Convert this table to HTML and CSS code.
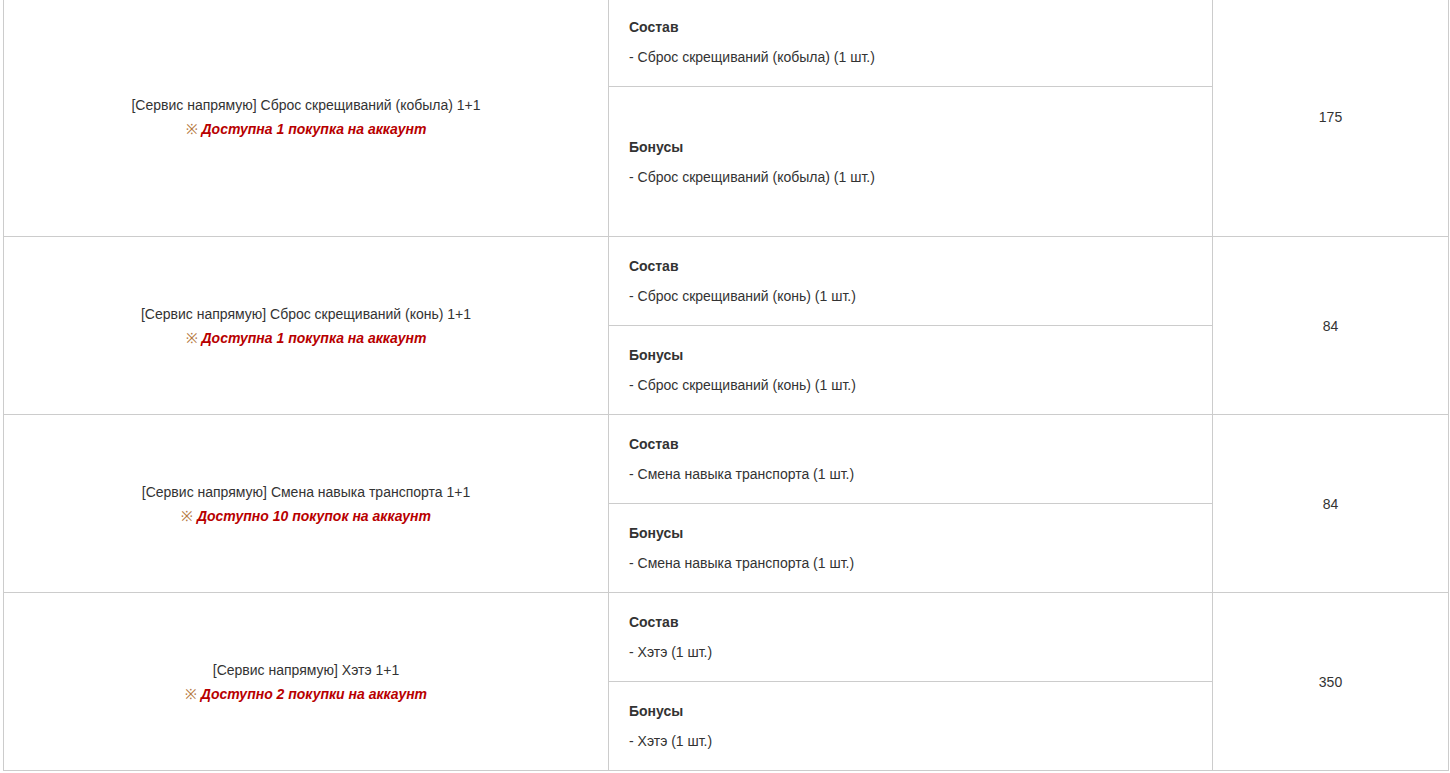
FILE: index.html
```html
<!DOCTYPE html>
<html lang="ru">
<head>
<meta charset="utf-8">
<title>Товары</title>
<link rel="stylesheet" href="styles.css">
</head>
<body>
<table class="goods">
  <colgroup>
    <col class="c-name">
    <col class="c-items">
    <col class="c-price">
  </colgroup>
  <tbody>
    <tr>
      <td class="name" rowspan="2">[Сервис напрямую] Сброс скрещиваний (кобыла) 1+1<br><span class="note"><span class="mark">※</span> Доступна 1 покупка на аккаунт</span></td>
      <td class="items"><p class="head">Состав</p><p>- Сброс скрещиваний (кобыла) (1 шт.)</p></td>
      <td class="price" rowspan="2">175</td>
    </tr>
    <tr>
      <td class="items tall"><p class="head">Бонусы</p><p>- Сброс скрещиваний (кобыла) (1 шт.)</p></td>
    </tr>
    <tr>
      <td class="name" rowspan="2">[Сервис напрямую] Сброс скрещиваний (конь) 1+1<br><span class="note"><span class="mark">※</span> Доступна 1 покупка на аккаунт</span></td>
      <td class="items"><p class="head">Состав</p><p>- Сброс скрещиваний (конь) (1 шт.)</p></td>
      <td class="price" rowspan="2">84</td>
    </tr>
    <tr>
      <td class="items"><p class="head">Бонусы</p><p>- Сброс скрещиваний (конь) (1 шт.)</p></td>
    </tr>
    <tr>
      <td class="name" rowspan="2">[Сервис напрямую] Смена навыка транспорта 1+1<br><span class="note"><span class="mark">※</span> Доступно 10 покупок на аккаунт</span></td>
      <td class="items"><p class="head">Состав</p><p>- Смена навыка транспорта (1 шт.)</p></td>
      <td class="price" rowspan="2">84</td>
    </tr>
    <tr>
      <td class="items"><p class="head">Бонусы</p><p>- Смена навыка транспорта (1 шт.)</p></td>
    </tr>
    <tr>
      <td class="name" rowspan="2">[Сервис напрямую] Хэтэ 1+1<br><span class="note"><span class="mark">※</span> Доступно 2 покупки на аккаунт</span></td>
      <td class="items"><p class="head">Состав</p><p>- Хэтэ (1 шт.)</p></td>
      <td class="price" rowspan="2">350</td>
    </tr>
    <tr>
      <td class="items"><p class="head">Бонусы</p><p>- Хэтэ (1 шт.)</p></td>
    </tr>
  </tbody>
</table>
</body>
</html>
```

FILE: styles.css
```css
html, body {
  background: #fff;
}
body {
  margin: -3px 0 0 3px;
  font-family: "Liberation Sans", Arial, sans-serif;
  font-size: 14px;
  color: #333;
}
.goods {
  width: 1445px;
  border-collapse: collapse;
  table-layout: fixed;
}
.c-name { width: 605px; }
.c-items { width: 604px; }
.c-price { width: 236px; }
.goods td {
  border: 1px solid #ccc;
  vertical-align: middle;
}
.name {
  text-align: center;
  line-height: 24px;
  padding: 0 10px;
}
.note {
  color: #b80000;
  font-weight: bold;
  font-style: italic;
}
.mark {
  color: #b5793f;
  font-style: normal;
  font-weight: normal;
}
.items {
  padding: 19px 20px;
  height: 50px;
}
.items p {
  margin: 10px 0 0;
  line-height: 20px;
}
.items p.head {
  margin: 0;
  font-weight: bold;
}
.items.tall {
  padding: 50px 20px 49px;
}
.price {
  text-align: center;
}
```
